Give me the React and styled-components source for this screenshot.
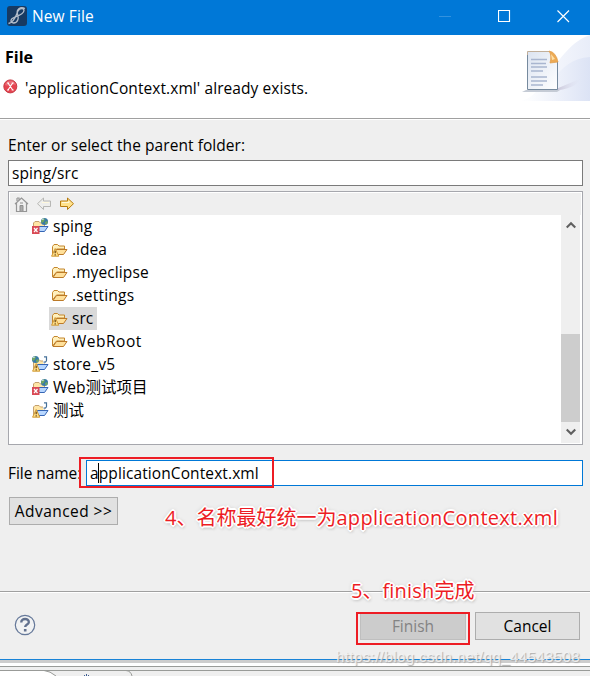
import React from "react";
import styled, { createGlobalStyle } from "styled-components";

const GlobalStyle = createGlobalStyle`
  * { box-sizing: border-box; }
  body { margin: 0; background: #efefef; overflow: hidden; }
`;

const Window = styled.div`
  position: relative;
  display: flex;
  flex-direction: column;
  width: 590px;
  height: 676px;
  overflow: hidden;
  background: #efefef;
  color: #000;
  font: 15.5px/23px "Open Sans", "Noto Sans CJK SC", sans-serif;
  white-space: pre;
`;

const Label = styled.span`
  letter-spacing: ${(p) => p.$track || 0}px;
`;

const TitleBar = styled.header`
  display: flex;
  align-items: center;
  height: 35px;
  padding: 0 20px 3px 7px;
  background: #0078d7;
  color: #fff;
`;

const Title = styled.span`
  flex: 1;
  margin-left: 5px;
  letter-spacing: 0.1px;
`;

const WindowButtons = styled.div`
  display: flex;
  gap: 46px;
`;

const Banner = styled.section`
  display: flex;
  justify-content: space-between;
  height: 84px;
  background: #fff;
  border-bottom: 1px solid #a0a0a0;
`;

const BannerText = styled.div`
  display: flex;
  flex-direction: column;
  padding: 11px 0 0 5px;
`;

const Heading = styled.h1`
  margin: 0;
  font: 700 16px/23px "Open Sans", sans-serif;
  letter-spacing: 0;
`;

const Message = styled.div`
  display: flex;
  align-items: center;
  gap: 7px;
  height: 24px;
  margin: 7px 0 0 -2px;
  svg { margin-top: -4px; }
`;

const Content = styled.main`
  display: flex;
  flex-direction: column;
  height: 472px;
  padding: 15px 7px 0 8px;
  border-top: 1px solid #fff;
`;

const FolderLabel = styled.label`
  height: 25px;
  line-height: 21px;
  letter-spacing: 0.06px;
`;

const TextField = styled.div`
  flex: ${(p) => (p.$grow ? 1 : "none")};
  height: 26px;
  padding-left: 3px;
  border: 1px solid ${(p) => (p.$active ? "#0078d7" : "#7a7a7a")};
  background: #fff;
  line-height: 25px;
  letter-spacing: 0.1px;
`;

const TreePanel = styled.section`
  height: 254px;
  margin-top: 5px;
  padding: 1px;
  border: 1px solid #a6a7ad;
  background: #fff;
`;

const TreeToolbar = styled.div`
  display: flex;
  align-items: center;
  gap: 7px;
  height: 22px;
  padding-left: 4px;
  background: #efefef;
  svg + svg { margin-left: -1px; }
  svg + svg + svg { margin-left: 0; }
`;

const TreeBody = styled.div`
  display: flex;
  height: 228px;
`;

const TreeList = styled.ul`
  flex: 1;
  margin: 0;
  padding: 0;
  list-style: none;
`;

const TreeRow = styled.li`
  display: flex;
  height: 23px;
  padding-left: ${(p) => (p.$level ? 39 : 21)}px;
`;

const TreeItem = styled.div`
  display: flex;
  align-items: center;
  gap: 4px;
  height: 23px;
  padding: 0 4px 0 ${(p) => (p.$child ? 2 : 1)}px;
  background: ${(p) => (p.$selected ? "#d9d9d9" : "transparent")};
`;

const Scrollbar = styled.div`
  display: flex;
  flex-direction: column;
  align-items: center;
  width: 19px;
  margin-right: 1px;
  background: #efefef;
`;

const ScrollTrack = styled.div`
  display: flex;
  align-items: flex-end;
  height: 187px;
`;

const ScrollThumb = styled.div`
  width: 19px;
  height: 88px;
  background: #cdcdcd;
`;

const ScrollArrow = styled.div`
  display: flex;
  align-items: center;
  justify-content: center;
  height: 20px;
`;

const FileRow = styled.div`
  display: flex;
  margin-top: 15px;
`;

const FileLabel = styled.label`
  width: 78px;
  line-height: 26px;
  letter-spacing: -0.05px;
`;

const PushButton = styled.button`
  width: ${(p) => p.$width}px;
  height: 28px;
  padding: 0;
  border: 1px solid ${(p) => (p.$muted ? "#bfbfbf" : "#adadad")};
  background: ${(p) => (p.$muted ? "#cccccc" : "#e1e1e1")};
  color: ${(p) => (p.$muted ? "#838383" : "#000")};
  font: inherit;
  line-height: 26px;
  letter-spacing: ${(p) => p.$track || 0}px;
`;

const AdvancedArea = styled.div`
  padding: 11px 0 0 1px;
`;

const Footer = styled.footer`
  display: flex;
  align-items: flex-start;
  gap: 9px;
  height: 68px;
  padding: 20px 10px 0 14px;
  border-top: 1px solid #a0a0a0;
  box-shadow: inset 0 1px #fff;
`;

const HelpSlot = styled.div`
  flex: 1;
  padding-top: 2px;
`;

const WindowEdge = styled.div`
  height: 11px;
  border-top: 1px solid #1883d7;
  background: linear-gradient(#cdcdcd 0 3px, #fff 3px 6px, #999b98 6px 7px, #efefef 7px);
`;

const RedFrame = styled.div`
  position: absolute;
  left: ${(p) => p.$x}px;
  top: ${(p) => p.$y}px;
  width: ${(p) => p.$w}px;
  height: ${(p) => p.$h}px;
  border: 2px solid #ed1c24;
`;

const Caret = styled.div`
  position: absolute;
  left: 98px;
  top: 463px;
  width: 1px;
  height: 20px;
  background: #000;
`;

const Note = styled.div`
  position: absolute;
  left: ${(p) => p.$x}px;
  top: ${(p) => p.$y}px;
  color: #ed1c24;
  font: 20px/28px "Open Sans", "Noto Sans CJK SC", sans-serif;
  text-shadow: -2px 0 #fff, 2px 0 #fff, 0 -2px #fff, 0 2px #fff,
    -1px -1px #fff, 1px -1px #fff, -1px 1px #fff, 1px 1px #fff,
    0 0 4px #999, 1px 2px 3px #aaa;
`;

const Watermark = styled.div`
  position: absolute;
  left: 336px;
  top: 649px;
  color: rgba(245, 245, 245, 0.85);
  font: 15px/16px "Liberation Sans", sans-serif;
  letter-spacing: 0.42px;
  text-shadow: 1px 1px 1px #aaa;
`;

const AppIcon = () => (
  <svg width="20" height="20" viewBox="0 0 20 20">
    <rect width="20" height="20" rx="3" fill="#173a62" />
    <path d="M18 2.5C13 0 9 4 10.5 8C12 12 11 17 6.5 17C3 17 3 13 7 11.5C11 10 17 8 17 4.5C17 2 13 1.5 11 5C9 9 8 16 1.5 17.5" fill="none" stroke="#b3bdca" strokeWidth="1.3" />
  </svg>
);

const CaptionIcon = ({ d, faint }) => (
  <svg width="13" height="13" viewBox="0 0 13 13">
    <path d={d} fill="none" stroke={faint ? "#3292df" : "#fff"} strokeWidth={faint ? 1 : 1.15} />
  </svg>
);

const ErrorIcon = () => (
  <svg width="15" height="15" viewBox="0 0 15 15">
    <circle cx="7.3" cy="7.4" r="6.5" fill="#e54450" stroke="#c73c46" />
    <path d="M2 6C3 1 11 0 13 6C9 4 6 8 2 6" fill="#ee8088" opacity=".65" />
    <path d="M5 4L9.7 11M9.7 4L5 11M4 4H6M8.7 4H10.7M4 11H6M8.7 11H10.7" stroke="#fff" strokeWidth="1.1" />
  </svg>
);

const BannerArt = () => (
  <svg width="72" height="66" viewBox="0 0 72 66">
    <defs>
      <linearGradient id="sweep" x1="0" x2="1">
        <stop offset="0" stopColor="#fff" />
        <stop offset="1" stopColor="#dce3f5" />
      </linearGradient>
      <linearGradient id="paper" x1="0" x2="1" y2="1">
        <stop stopColor="#dce4f1" />
        <stop offset="1" stopColor="#fff" />
      </linearGradient>
      <linearGradient id="shade">
        <stop stopColor="#bcb5ca" />
        <stop offset="1" stopColor="#e1e5f5" stopOpacity="0" />
      </linearGradient>
    </defs>
    <path d="M0 66C28 65 35 13 72 0V66Z" fill="url(#sweep)" opacity=".65" />
    <path d="M6 66C32 63 36 24 72 22V66Z" fill="url(#sweep)" />
    <path d="M38 54L64 43Q58 54 34 56Z" fill="url(#shade)" />
    <path d="M8 55H42L39 57H4Z" fill="#c5cbd5" />
    <path d="M9.5 16.5H31Q38 18 39.5 26V54.5H9.5Z" fill="url(#paper)" />
    <path d="M9.5 54V16.5H31" fill="none" stroke="#c1af9a" />
    <path d="M9.5 20V54.5H39.5V26" fill="none" stroke="#768a9e" />
    <path d="M31 16Q38 17 40 27L32 28Q34 20 31 16Z" fill="#edaa54" stroke="#df9b48" strokeWidth=".7" />
    <path d="M33 19L37 24L34 25Z" fill="#ffe0a7" />
    <path d="M13 24.5H29M13 28.5H28M13 32H29M13 36H25M13 42H29M13 46H29M13 50H25" stroke="#a9b6d0" strokeWidth="1.4" />
  </svg>
);

const HomeIcon = () => (
  <svg width="16" height="18" viewBox="0 0 16 18">
    <path d="M1 9L7.5 3L14 9M2.5 8V16.5H12.5V8M3 3V6M3 3H5V5" fill="none" stroke="#969696" strokeWidth="1.2" />
    <path d="M6 16V10.5H9V16M6 8H9" fill="#aaa" stroke="#8e8e8e" />
  </svg>
);

const ArrowIcon = ({ forward }) => (
  <svg width="16" height="16" viewBox="0 0 16 16">
    <path
      d={forward ? "M1.5 5H8.5V2L14.5 7.7L8.5 13.5V10.5H1.5Z" : "M14.5 5H7.5V2L1.5 7.7L7.5 13.5V10.5H14.5Z"}
      fill={forward ? "#ffe28b" : "#eeeeec"}
      stroke={forward ? "#b77b10" : "#b7b7b4"}
    />
    <path d={forward ? "M3 6.5H10V5" : "M6 6.5H13"} fill="none" stroke="#fff8dc" />
  </svg>
);

const Warning = () => (
  <g>
    <path d="M4.2 7.5L.6 15.2H7.8Z" fill="#ffe08a" stroke="#d29b35" />
    <path d="M4.2 9.7V12.2M4.2 13.2V14.5" stroke="#704b18" strokeWidth="1.3" />
  </g>
);

const FolderIcon = ({ warning }) => (
  <svg width="17" height="17" viewBox="0 0 17 17">
    <path d="M1.5 13V5.5L3 3.5H6.5L8 5H13.5V8H5.5L1.5 13Z" fill="#fff0bd" stroke="#c4862c" />
    <path d="M2 13.5L5.5 8.5H16L12.5 13.5Z" fill="#ffe09a" stroke="#bc7a28" />
    {warning && <Warning />}
  </svg>
);

const Globe = ({ x, y }) => (
  <g transform={`translate(${x} ${y})`}>
    <circle cx="3.5" cy="3.5" r="3.5" fill="#387aa7" />
    <path d="M0 3Q1 0 4 .7L3 3.5L1 5ZM4 4L6.5 3V5.5L4.5 6.6Z" fill="#74a75e" />
    <path d="M1 1.5L3 1" stroke="#c4dfdf" />
  </g>
);

const ProjectIcon = ({ kind }) => (
  <svg width="17" height="17" viewBox="0 0 17 17">
    <path d="M1.5 13V5L3 3.5H7L8.5 5H12.5V9H5Z" fill="#ffe6a6" stroke="#c4a06e" />
    <path d="M5.5 8.5H16L12.5 13.5H4Z" fill="#b8d7ff" stroke="#3666b5" />
    {kind === "error" ? (
      <>
        <Globe x={9} y={0} />
        <rect y="8" width="7.5" height="8" fill="#d94a55" />
        <path d="M2 10L5.5 14M5.5 10L2 14" stroke="#fff" strokeWidth="1.2" />
      </>
    ) : (
      <>
        <path d="M11 0H17V7.5H11Z" fill="#fff" />
        <path d="M12 .8H14.5V4.5Q14.2 6.5 11.5 6" fill="none" stroke="#46719a" strokeWidth="1.2" />
        <Warning />
        {kind === "java-web" && <Globe x={0} y={0} />}
      </>
    )}
  </svg>
);

const Chevron = ({ down }) => (
  <svg width="10" height="8" viewBox="0 0 10 8">
    <path d={down ? "M.7 1.5L5 5.8L9.3 1.5" : "M.7 6.5L5 2.2L9.3 6.5"} fill="none" stroke="#606060" strokeWidth="2.2" />
  </svg>
);

const HelpIcon = () => (
  <svg width="22" height="22" viewBox="0 0 22 22">
    <circle cx="11" cy="11" r="9.7" fill="#f1f2f3" stroke="#657899" strokeWidth="1.2" />
    <path d="M7.3 8.5C7 4 15 3.8 14.8 8.2C14.7 10.6 11.2 10.5 11.2 13" fill="none" stroke="#62718e" strokeWidth="2.4" />
    <path d="M11.2 15V17.5" stroke="#62718e" strokeWidth="2.6" />
  </svg>
);

const EditorTabs = () => (
  <svg width="590" height="6" viewBox="0 0 590 6">
    <path d="M0 .5H43Q49 1 55 6H0Z" fill="#fff" />
    <path d="M0 .5H590M44 .5Q50 1 56 6M126 .5Q131 1 132 6" fill="none" stroke="#999b98" />
    <path d="M84.5 5V6M86.5 4V6M88.5 5V6" stroke="#3e5d91" />
  </svg>
);

const items = [
  { name: "sping", kind: "error", track: 0.1 },
  { name: ".idea", level: 1, warning: true },
  { name: ".myeclipse", level: 1, track: 0.1 },
  { name: ".settings", level: 1, track: 0.2 },
  { name: "src", level: 1, warning: true, selected: true },
  { name: "WebRoot", level: 1, track: 0.5 },
  { name: "store_v5", kind: "java-web", track: 0.2 },
  { name: "Web测试项目", kind: "error" },
  { name: "测试", kind: "java" },
];

export default function App() {
  return (
    <Window>
      <GlobalStyle />
      <TitleBar>
        <AppIcon />
        <Title>New File</Title>
        <WindowButtons>
          <CaptionIcon d="M0 6.5H12" faint />
          <CaptionIcon d="M.5 .5H11.5V11.5H.5Z" />
          <CaptionIcon d="M.5 .5L12 12M12 .5L.5 12" />
        </WindowButtons>
      </TitleBar>
      <Banner>
        <BannerText>
          <Heading>File</Heading>
          <Message>
            <ErrorIcon />
            <Label $track={0.08}>'applicationContext.xml' already exists.</Label>
          </Message>
        </BannerText>
        <BannerArt />
      </Banner>
      <Content>
        <FolderLabel>Enter or select the parent folder:</FolderLabel>
        <TextField>sping/src</TextField>
        <TreePanel>
          <TreeToolbar>
            <HomeIcon />
            <ArrowIcon />
            <ArrowIcon forward />
          </TreeToolbar>
          <TreeBody>
            <TreeList>
              {items.map((item) => (
                <TreeRow key={item.name} $level={item.level}>
                  <TreeItem $child={item.level} $selected={item.selected}>
                    {item.level ? <FolderIcon warning={item.warning} /> : <ProjectIcon kind={item.kind} />}
                    <Label $track={item.track}>{item.name}</Label>
                  </TreeItem>
                </TreeRow>
              ))}
            </TreeList>
            <Scrollbar>
              <ScrollArrow><Chevron /></ScrollArrow>
              <ScrollTrack><ScrollThumb /></ScrollTrack>
              <ScrollArrow><Chevron down /></ScrollArrow>
            </Scrollbar>
          </TreeBody>
        </TreePanel>
        <FileRow>
          <FileLabel>File name:</FileLabel>
          <TextField $grow $active>applicationContext.xml</TextField>
        </FileRow>
        <AdvancedArea>
          <PushButton $width={109} $track={0.45}>Advanced &gt;&gt;</PushButton>
        </AdvancedArea>
      </Content>
      <Footer>
        <HelpSlot><HelpIcon /></HelpSlot>
        <PushButton $width={106} $muted>Finish</PushButton>
        <PushButton $width={105}>Cancel</PushButton>
      </Footer>
      <WindowEdge />
      <EditorTabs />
      <Caret />
      <RedFrame $x={79} $y={457} $w={195} $h={31} />
      <RedFrame $x={356} $y={612} $w={114} $h={33} />
      <Note $x={165} $y={504}>4、名称最好统一为<Label $track={0.3}>applicationContext.xml</Label></Note>
      <Note $x={351} $y={577}>5、<Label $track={0.2}>finish</Label>完成</Note>
      <Watermark>https://blog.csdn.net/qq_44543508</Watermark>
    </Window>
  );
}
